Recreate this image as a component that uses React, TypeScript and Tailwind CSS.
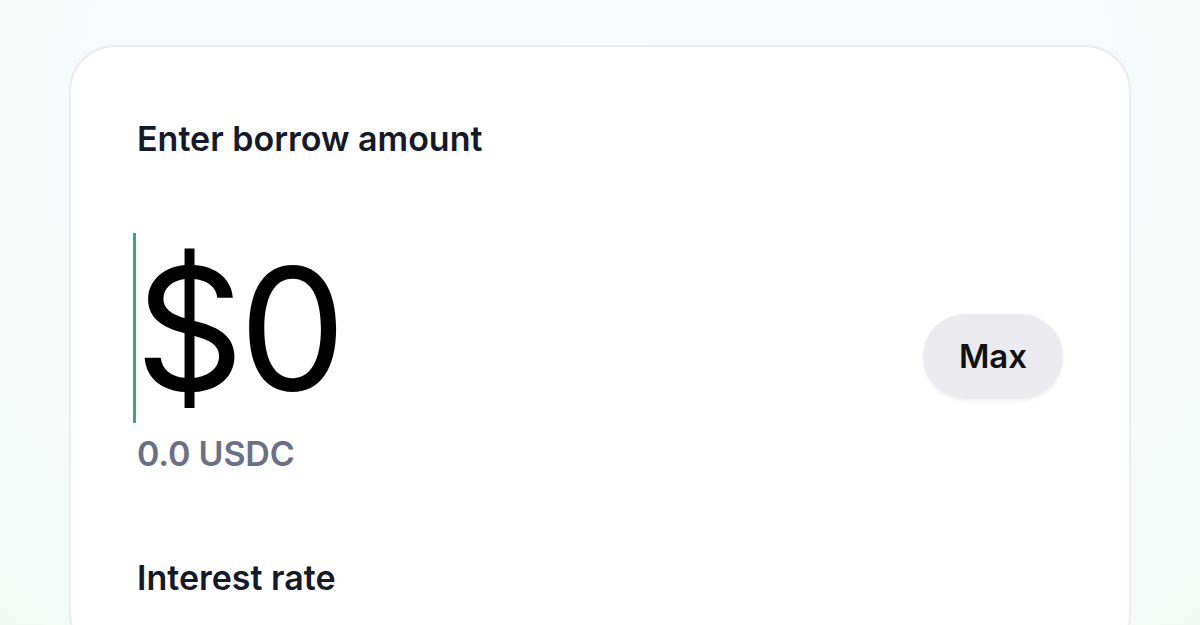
export default function App() {
  return (
    <main
      className="min-h-screen w-full overflow-hidden bg-[radial-gradient(ellipse_at_50%_20%,#fafbfc_0%,#f8fafb_55%,#f2faf6_100%)] px-[69px] pt-[45px]"
      style={{ fontFamily: 'Inter, "Noto Sans", sans-serif' }}
    >
      <div className="rounded-[46px] border-2 border-[#ebecf0] bg-white px-[66px] pt-[72px] pb-[60px]">
        {/* borrow amount */}
        <h2 className="text-[34px] leading-[40px] font-semibold text-[#141a2a]">
          Enter borrow amount
        </h2>

        <div className="mt-[74px] flex items-center justify-between">
          <div className="flex flex-col">
            <div className="-ml-[4px] flex h-[190px] items-center">
              <div className="h-[190px] w-[3px] bg-[#4c9f82]" />
              <span className="-ml-[1px] text-[170px] leading-none font-normal text-black tracking-[-5px]">
                $0
              </span>
            </div>
            <span className="mt-[11px] text-[34px] leading-[40px] font-semibold text-[#6b7087] tracking-[-0.2px]">
              0.0 USDC
            </span>
          </div>

          <button className="mt-[6px] h-[85px] w-[140px] rounded-full bg-[#ebebef] text-[33px] font-semibold text-[#111] shadow-[0_2px_4px_rgba(0,0,0,0.06)]">
            Max
          </button>
        </div>

        <h2 className="mt-[84px] text-[34px] leading-[40px] font-semibold text-[#141a2a]">
          Interest rate
        </h2>
      </div>
    </main>
  );
}
